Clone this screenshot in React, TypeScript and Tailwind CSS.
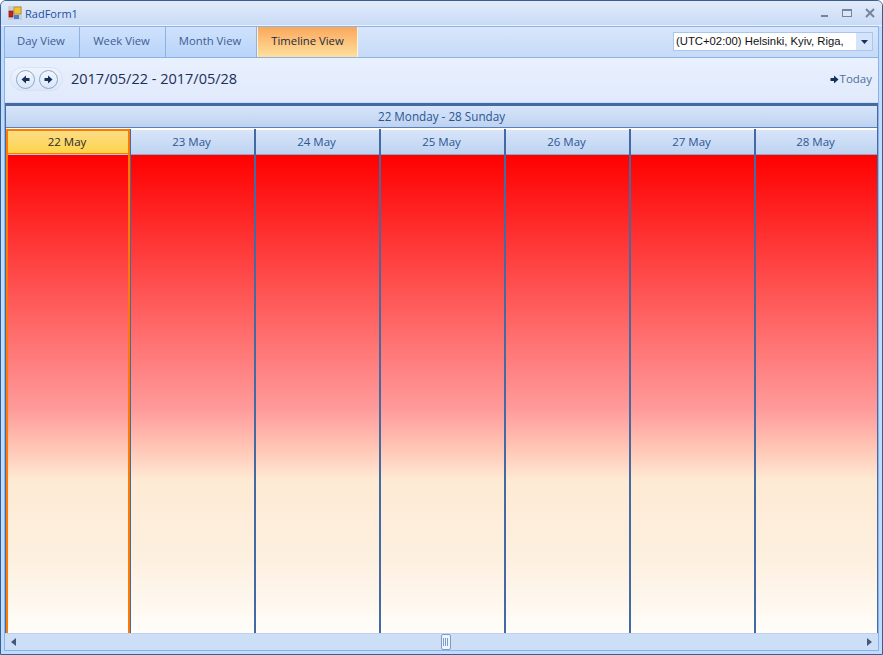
import type { ReactNode } from 'react';

const days = ['22 May', '23 May', '24 May', '25 May', '26 May', '27 May', '28 May'];
const views = [
  { label: 'Day View', width: 'w-[75px]' },
  { label: 'Week View', width: 'w-[86px]' },
  { label: 'Month View', width: 'w-[91px]' },
  { label: 'Timeline View', width: 'w-[101px]' },
];

const cellGradient =
  'flex-1 bg-[linear-gradient(180deg,#ff0000_0%,#ff9a9a_53%,#ffc4b4_61%,#feead4_68%,#fdf0e0_85%,#fffdfa_100%)]';

function NavButton({ children }: { children: ReactNode }) {
  return (
    <span className="flex h-[19px] w-[19px] items-center justify-center rounded-full border border-[#8fa6c8] bg-gradient-to-b from-[#f2f6fd] to-[#dbe6f8]">
      {children}
    </span>
  );
}

function Arrow({ left = false }: { left?: boolean }) {
  return (
    <svg width="9" height="9" viewBox="0 0 9 9" className={left ? 'rotate-180' : ''}>
      <path d="M0.5 3H4V0.5L8.5 4.5L4 8.5V6H0.5Z" fill="#15315f" />
    </svg>
  );
}

export default function App() {
  return (
    <div className="flex h-[655px] w-[883px] flex-col overflow-hidden rounded-t-[6px] border border-[#3b5e91] bg-[#bfdbff] font-['Open_Sans',sans-serif] text-[11.5px]">
      <div className="flex h-[25px] shrink-0 items-center justify-between border-b border-[#eaf2fd] bg-gradient-to-b from-[#e3ebfa] to-[#c8dbf6] pl-[7px] pr-[7px]">
        <div className="flex items-center gap-[3px]">
          <svg width="14" height="14" viewBox="0 0 14 14">
            <rect x="0" y="0" width="14" height="14" fill="#c9cfd8" />
            <rect x="6" y="1" width="7" height="7" fill="#f2c230" stroke="#9a7a20" strokeWidth="0.6" />
            <rect x="1" y="5" width="4" height="6" fill="#c8201c" stroke="#6b1210" strokeWidth="0.6" />
            <rect x="6" y="9" width="5" height="4" fill="#4a7fd0" />
          </svg>
          <span className="text-[11px] leading-none text-[#1d4f9c]">RadForm1</span>
        </div>
        <div className="flex items-center gap-[13px]">
          <svg width="9" height="10" viewBox="0 0 9 10">
            <rect x="1" y="7" width="7" height="2" fill="#76859a" />
          </svg>
          <svg width="10" height="10" viewBox="0 0 10 10">
            <rect x="0.5" y="1.5" width="9" height="7" fill="#dbe6f6" stroke="#76859a" />
            <rect x="0.5" y="1" width="9" height="2" fill="#76859a" />
          </svg>
          <svg width="10" height="10" viewBox="0 0 10 10">
            <path d="M1 1L9 9M9 1L1 9" stroke="#76859a" strokeWidth="2" />
          </svg>
        </div>
      </div>

      <div className="flex min-h-0 flex-1 flex-col px-[3px] pb-[3px]">
        <div className="flex min-h-0 flex-1 flex-col border border-[#8db2e3] bg-[#e4edfd]">
          <div className="flex h-[31px] shrink-0 items-stretch justify-between border-b border-[#8db2e3] bg-gradient-to-b from-[#d7e6fb] to-[#c6dbf8] text-[11.3px]">
            <div className="flex">
              {views.map((view) =>
                view.label === 'Timeline View' ? (
                  <div
                    key={view.label}
                    className={`flex ${view.width} items-center justify-center border-x border-[#fff2d0] bg-gradient-to-b from-[#f9a85b] to-[#fedf9c] pb-px text-[#202a44]`}
                  >
                    {view.label}
                  </div>
                ) : (
                  <div
                    key={view.label}
                    className={`flex ${view.width} items-center justify-center border-r border-[#8db2e3] bg-gradient-to-b from-[#cfe2fb] to-[#b8d4fa] pb-px pr-[2px] text-[#3d5c96]`}
                  >
                    {view.label}
                  </div>
                ),
              )}
            </div>
            <div className="mr-[5px] mt-[5px] flex h-[19px] w-[200px] items-center justify-between border border-[#a9c6ed] bg-white pl-[2px] font-['Liberation_Sans',sans-serif] text-[11.3px] text-[#111]">
              <span>(UTC+02:00) Helsinki, Kyiv, Riga,</span>
              <span className="flex h-full w-[16px] items-center justify-center bg-[#d5e4f9]">
                <svg width="7" height="4" viewBox="0 0 7 4">
                  <path d="M0 0H7L3.5 4Z" fill="#15315f" />
                </svg>
              </span>
            </div>
          </div>

          <div className="flex h-[45px] shrink-0 items-center justify-between border-b border-[#d0def5] bg-gradient-to-b from-[#e9f0fe] to-[#e0eafc] pb-[2px] pl-[5px] pr-[6px]">
            <div className="flex items-center gap-[8px]">
              <div className="flex h-[24px] w-[53px] items-center justify-center gap-[4px] rounded-[12px] border border-[#d6e2f6] bg-gradient-to-b from-[#eef4fe] to-[#dce7fa]">
                <NavButton>
                  <Arrow left />
                </NavButton>
                <NavButton>
                  <Arrow />
                </NavButton>
              </div>
              <span className="text-[14.5px] text-[#1b2f57]">2017/05/22 - 2017/05/28</span>
            </div>
            <div className="flex items-center gap-[1px] text-[#4f6d9c]">
              <Arrow />
              <span>Today</span>
            </div>
          </div>

          <div className="flex min-h-0 flex-1 flex-col border-x border-t-[3px] border-x-[#436aa3] border-t-[#436aa3]">
            <div className="flex h-[22px] shrink-0 items-center justify-center border-b border-[#5b7fb2] bg-gradient-to-b from-[#d8e5f9] to-[#bed3f1] text-[11.7px] text-[#2b5695]">
              22 Monday - 28 Sunday
            </div>
            <div className="flex min-h-0 flex-1 bg-white pt-px">
              <div className="flex w-[124px] shrink-0 flex-col border-x-2 border-[#ff7a00]">
                <div className="h-[26px] shrink-0 border-b border-[#b9c8e6]">
                  <div className="flex h-[25px] items-center justify-center border-b border-t-2 border-[#ff7a00] bg-gradient-to-b from-[#fbdd85] to-[#ffd447] pr-[2px] text-[#2a2a2a]">
                    {days[0]}
                  </div>
                </div>
                <div className={cellGradient} />
              </div>
              <div className="w-px shrink-0 bg-[#436aa3]" />
              {days.slice(1).map((day) => (
                <div
                  key={day}
                  className="flex w-[125px] flex-col border-r-2 border-[#436aa3] last:w-auto last:flex-1 last:border-r-0"
                >
                  <div className="flex h-[26px] shrink-0 items-center justify-center border-t border-b border-t-white border-b-[#8aa5cf] bg-gradient-to-b from-[#d8e5f9] to-[#bed3f1] pr-[2px] text-[#2b5695]">
                    {day}
                  </div>
                  <div className={cellGradient} />
                </div>
              ))}
            </div>
          </div>
          <div className="flex h-[17px] shrink-0 items-center justify-between border-t border-[#c0d2ea] bg-[#cddff6] px-[6px]">
            <svg width="5" height="8" viewBox="0 0 5 8">
              <path d="M5 0V8L0 4Z" fill="#45587a" />
            </svg>
            <span className="ml-[8px] flex h-[16px] w-[10px] justify-center gap-px rounded-[2px] border border-[#7f9cc8] bg-[#eef4fd] py-[3px]">
              <span className="w-px bg-[#7f9cc8]" />
              <span className="w-px bg-[#7f9cc8]" />
              <span className="w-px bg-[#7f9cc8]" />
            </span>
            <svg width="5" height="8" viewBox="0 0 5 8">
              <path d="M0 0V8L5 4Z" fill="#45587a" />
            </svg>
          </div>
        </div>
      </div>
    </div>
  );
}
